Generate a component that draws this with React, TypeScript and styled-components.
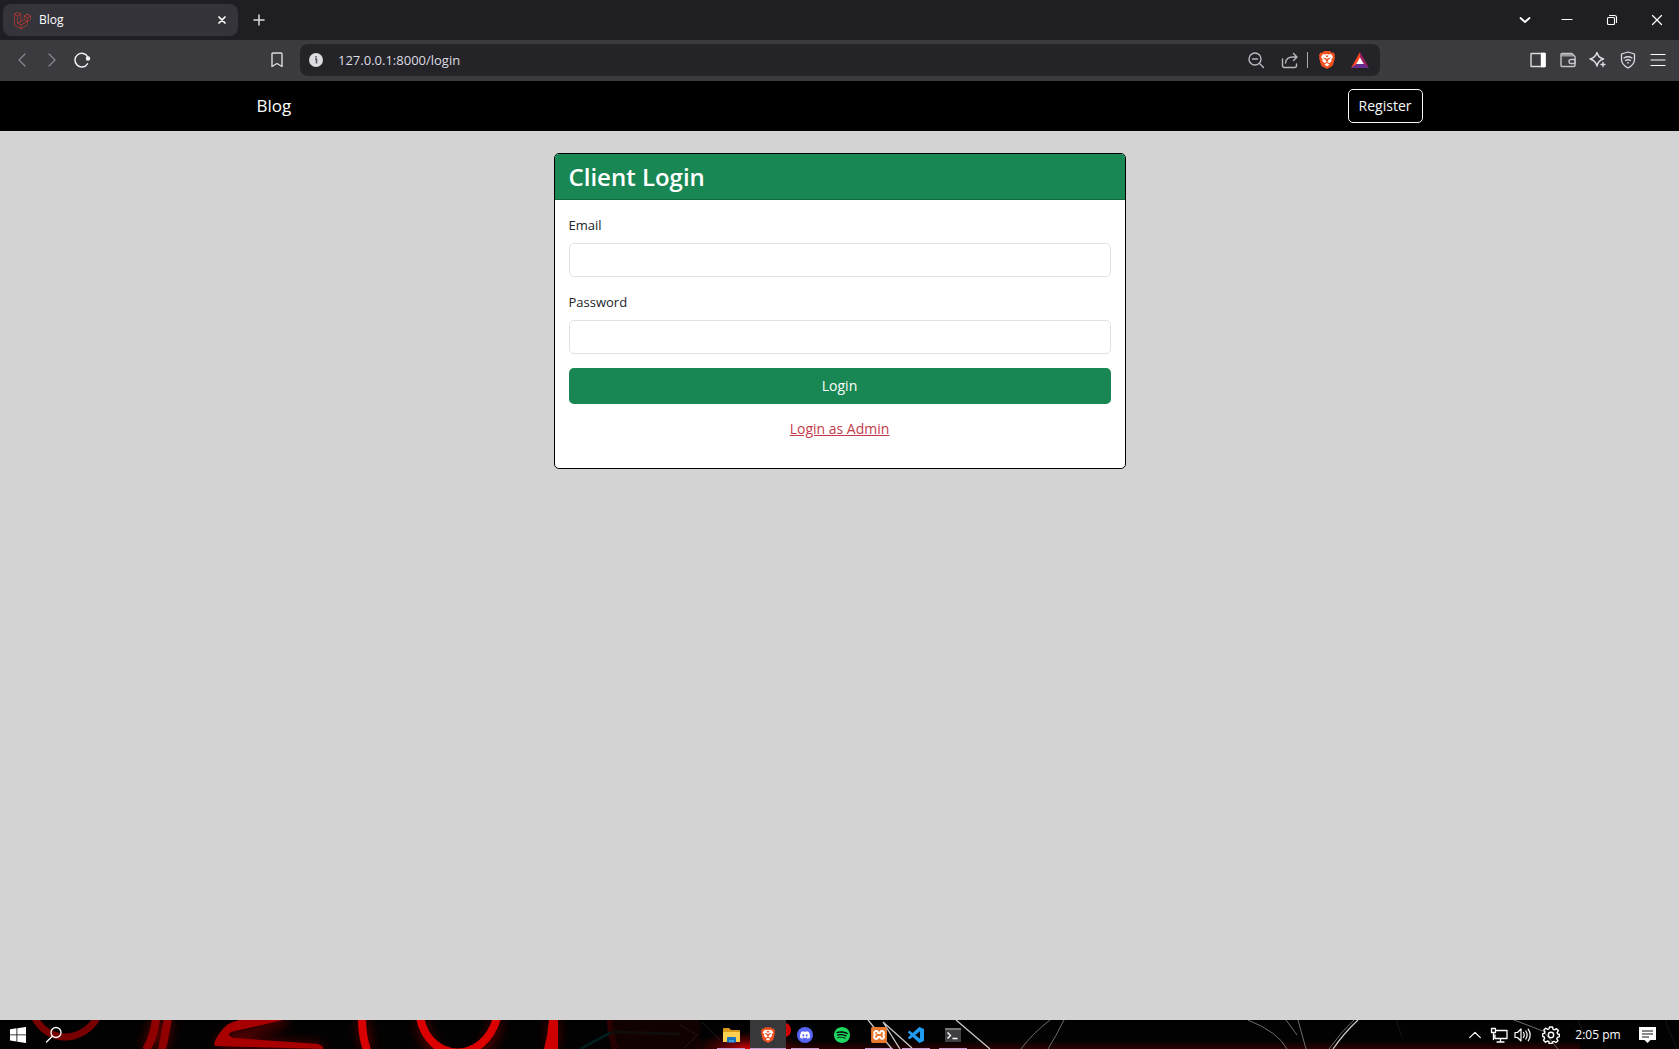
import React from "react";
import styled, { createGlobalStyle } from "styled-components";
import { SiLaravel, SiDiscord, SiSpotify, SiXampp } from "react-icons/si";

const GlobalStyle = createGlobalStyle`
  *, *::before, *::after { box-sizing: border-box; }
  body {
    margin: 0;
    background: #d3d3d3;
    font-family: "Open Sans", "Noto Sans", sans-serif;
    font-size: 14px;
    line-height: 22px;
    color: #212529;
  }
  button, input { font: inherit; }
`;

const Screen = styled.div`
  display: flex;
  flex-direction: column;
  min-height: 100vh;
`;

/* Browser window */

const TitleBar = styled.header`
  display: flex;
  align-items: center;
  justify-content: space-between;
  height: 40px;
  padding-left: 3px;
  background: #1f1e23;
`;

const Row = styled.div`
  display: flex;
  align-items: center;
`;

const Tab = styled.div`
  display: flex;
  align-items: center;
  gap: 8px;
  width: 235px;
  height: 32px;
  padding: 0 6px 0 11px;
  border-radius: 8px;
  background: #35343a;
  color: #fff;
  font-size: 12px;
`;

const TabTitle = styled.span`
  flex: 1;
`;

const IconButton = styled.button<{ $width?: number; $color?: string }>`
  display: flex;
  align-items: center;
  justify-content: center;
  flex: none;
  width: ${(p) => p.$width ?? 30}px;
  height: 28px;
  padding: 0;
  border: 0;
  background: transparent;
  color: ${(p) => p.$color ?? "#dcdbe0"};
`;

const Toolbar = styled.div`
  display: grid;
  grid-template-columns: 300px 1fr 299px;
  align-items: center;
  height: 41px;
  padding-bottom: 1px;
  background: #3b3a3f;
`;

const ToolbarStart = styled(Row)`
  justify-content: space-between;
  padding: 0 8px 0 7px;
`;

const ToolbarEnd = styled(Row)`
  justify-content: flex-end;
  padding-right: 6px;
`;

const AddressBar = styled.div`
  display: flex;
  align-items: center;
  height: 32px;
  padding: 0 3px 0 1px;
  border-radius: 8px;
  background: #242328;
`;

const AddressInput = styled.input`
  flex: 1;
  min-width: 0;
  padding: 0 7px;
  border: 0;
  outline: 0;
  background: transparent;
  color: #dddce0;
  font-size: 13px;
`;

const Divider = styled.span`
  width: 1px;
  height: 16px;
  margin-right: 3px;
  background: #a9a8ad;
`;

/* Page */

const NavBar = styled.nav`
  background: #000;
`;

const Container = styled.div`
  width: 100%;
  max-width: 1188px;
  margin: 0 auto;
  padding: 0 11px;
`;

const NavContent = styled(Container)`
  display: flex;
  align-items: center;
  justify-content: space-between;
  height: 50px;
`;

const Brand = styled.a`
  color: #fff;
  font-size: 17px;
  text-decoration: none;
`;

const RegisterLink = styled.a`
  padding: 5px 10px;
  border: 1px solid #f8f9fa;
  border-radius: 5px;
  color: #f8f9fa;
  font-size: 14px;
  text-decoration: none;
`;

const Main = styled.main`
  flex: 1;
  padding: 22px 0;
`;

const Card = styled.section`
  width: 50%;
  min-width: 320px;
  max-width: 572px;
  margin: 0 auto;
  border: 1px solid #000;
  border-radius: 5px;
  background: #fff;
  overflow: hidden;
`;

const CardHeader = styled.h3`
  margin: 0;
  padding: 7px 14px;
  border-bottom: 1px solid #15693f;
  background: #198754;
  color: #fff;
  font-size: 24px;
  font-weight: 600;
  line-height: 31px;
`;

const LoginForm = styled.form`
  display: flex;
  flex-direction: column;
  gap: 14px;
  padding: 14px 14px 28px;
`;

const Field = styled.div`
  display: flex;
  flex-direction: column;
  gap: 7px;
`;

const Label = styled.label`
  font-size: 13px;
`;

const TextInput = styled.input`
  height: 34px;
  padding: 5px 11px;
  border: 1px solid #dee2e6;
  border-radius: 5px;
  background: #fff;
`;

const SubmitButton = styled.button`
  height: 36px;
  border: 0;
  border-radius: 5px;
  background: #198754;
  color: #fff;
  font-size: 14px;
`;

const AdminLink = styled.a`
  align-self: center;
  color: #c43c4b;
  font-size: 14px;
  text-decoration: underline;
`;

/* Desktop taskbar */

const TaskBar = styled.footer`
  position: relative;
  display: grid;
  grid-template-columns: 1fr auto 1fr;
  height: 29px;
  background: #020202;
  overflow: hidden;
`;

const Wallpaper = styled.svg`
  position: absolute;
  inset: 0;
  width: 100%;
  height: 100%;
`;

const TaskGroup = styled.div<{ $align?: string }>`
  position: relative;
  display: flex;
  align-items: stretch;
  justify-content: ${(p) => p.$align ?? "flex-start"};
`;

const AppGroup = styled(TaskGroup)`
  gap: 1px;
  padding-left: 5px;
`;

const TaskButton = styled.button<{ $active?: boolean; $running?: boolean; $width?: number }>`
  display: flex;
  align-items: center;
  justify-content: center;
  width: ${(p) => p.$width ?? 36}px;
  padding: 1px 0 0;
  border: 0;
  color: #fff;
  background-color: ${(p) => (p.$active ? "#38373a" : "transparent")};
  background-image: ${(p) => (p.$running ? "linear-gradient(#c79bdc, #c79bdc)" : "none")};
  background-repeat: no-repeat;
  background-position: bottom center;
  background-size: ${(p) => (p.$active ? "36px" : "28px")} 1px;
`;

const Clock = styled.time`
  align-self: center;
  width: 62px;
  color: #fff;
  font-size: 12px;
  text-align: center;
`;

type LineIconProps = { size?: number; width?: number; children: React.ReactNode };

const LineIcon = ({ size = 18, width = 1.4, children }: LineIconProps) => (
  <svg
    width={size}
    height={size}
    viewBox="0 0 18 18"
    fill="none"
    stroke="currentColor"
    strokeWidth={width}
    strokeLinecap="round"
    strokeLinejoin="round"
    aria-hidden="true"
  >
    {children}
  </svg>
);

const BraveIcon = ({ width = 16, height = 18 }: { width?: number; height?: number }) => (
  <svg width={width} height={height} viewBox="0 0 32 36" aria-hidden="true">
    <path fill="#f1501f" d="M10 0h12l3.500 3.500 3.500-.5 3 5-1 3.500 1 2-3.500 13c-.7 2.500-2 3.700-4 5L16 36l-8.500-4.500c-2-1.300-3.300-2.500-4-5L0 13.500l1-2L0 8l3-5 3.500.5z" />
    <path fill="#fff" d="M16 6l4 1 4-1 4 6-3.500 5 1 3-5 4.500-3-2.500-1.500.5-1.500-.5-3 2.500-5-4.500 1-3L4 12l4-6 4 1z" />
    <path fill="#fff" d="M16 24l5 3-5 4-5-4z" />
    <path fill="#f1501f" d="M8 13l6 1.500-1 4zM24 13l-6 1.500 1 4zM13 9h6l-1.500 3h-3zM14.500 15h3l1 5-2.500 2-2.500-2z" />
  </svg>
);

const WallpaperArt = () => (
  <Wallpaper viewBox="0 0 1679 29" preserveAspectRatio="none" aria-hidden="true">
    <defs>
      <filter id="glow" x="-30%" y="-60%" width="160%" height="220%">
        <feGaussianBlur stdDeviation="6" />
      </filter>
      <filter id="soft">
        <feGaussianBlur stdDeviation="0.7" />
      </filter>
      <linearGradient id="floor" x1="0" y1="0" x2="0" y2="1">
        <stop offset="0.7" stopColor="#200" stopOpacity="0" />
        <stop offset="1" stopColor="#2b0200" />
      </linearGradient>
      <radialGradient id="ember">
        <stop offset="0" stopColor="#e00000" />
        <stop offset="1" stopColor="#500" stopOpacity="0" />
      </radialGradient>
    </defs>
    <rect x="780" width="800" height="29" fill="url(#floor)" />
    <g filter="url(#glow)" opacity="0.45" fill="none" stroke="#c00000" strokeWidth="10">
      <path d="M156 0Q154 17 146 29M167 0L162 29M285 0L218 22L322 29" />
      <path d="M362 0L367 29M421 0C430 56 486 56 497 0M553 0V29" />
    </g>
    <g filter="url(#soft)" fill="none">
      <path d="M34 -4C47 24 83 24 98 -4" stroke="#780000" strokeWidth="7" />
      <path d="M156 -1Q154 17 146 30M168 -1L162 30" stroke="#900000" strokeWidth="8" />
      <path fill="#a80000" d="M240 0H283L231 12Q226 16 234 18L318 24Q324 26 323 29L215 26Q212 23 222 10Q228 2 240 0Z" />
      <path d="M362 -1Q362 16 367 30" stroke="#d80000" strokeWidth="8" />
      <path d="M420 -2C430 44 484 44 497 -2" stroke="#dc0000" strokeWidth="8" />
      <path fill="#cf0000" d="M549 0H558V29H544Q548 15 549 0Z" />
      <path d="M610 0Q610 16 616 29" stroke="#300404" strokeWidth="6" />
      <path d="M580 29L612 12L680 14" stroke="#041b1a" strokeWidth="3" />
    </g>
    <rect x="610" width="90" height="29" fill="#1c0101" opacity="0.6" />
    <ellipse cx="748" cy="29" rx="58" ry="18" fill="url(#ember)" />
    <ellipse cx="785" cy="10" rx="6" ry="7" fill="#d00000" />
    <g fill="none" stroke="#c8c8c8" strokeWidth="1.300">
      <path d="M868 0L892 29M883 2L912 28M883 2L900 29M956 0L990 29" />
      <path d="M1358 0Q1344 13 1333 29" />
    </g>
    <g fill="none" stroke="#6d6d6d">
      <path d="M1050 0Q1032 14 1021 29M1064 0Q1056 16 1048 29M1248 0Q1278 12 1287 29" />
      <path d="M1286 0L1297 15M1298 0L1306 29M1354 0Q1340 13 1329 29M1514 0L1543 11L1558 29" />
      <path d="M680 5L697 15L684 28M702 2L720 20M1578 0L1586 20M1665 0L1677 29M1396 0L1402 17" opacity="0.2" />
    </g>
  </Wallpaper>
);

export default function App() {
  return (
    <Screen>
      <GlobalStyle />
      <TitleBar>
        <Row>
          <Tab>
            <SiLaravel size={17} color="#e23b30" aria-hidden="true" />
            <TabTitle>Blog</TabTitle>
            <IconButton $width={20} $color="#fff" aria-label="Close tab">
              <LineIcon width={1.7}><path d="M6 6l6 6M12 6l-6 6" /></LineIcon>
            </IconButton>
          </Tab>
          <IconButton $width={42} aria-label="New tab">
            <LineIcon width={1.5}><path d="M9 4v10M4 9h10" /></LineIcon>
          </IconButton>
        </Row>
        <Row>
          <IconButton $width={38} $color="#fff" aria-label="Search tabs">
            <LineIcon width={1.8}><path d="M4.500 7l4.500 4 4.500-4" /></LineIcon>
          </IconButton>
          <IconButton $width={45} $color="#fff" aria-label="Minimize">
            <LineIcon width={1}><path d="M4 8.500h10" /></LineIcon>
          </IconButton>
          <IconButton $width={45} $color="#fff" aria-label="Restore">
            <LineIcon width={1.1}>
              <rect x="4.500" y="6.500" width="7" height="7" rx="1" />
              <path d="M6.500 4.500h5a2 2 0 0 1 2 2v5" />
            </LineIcon>
          </IconButton>
          <IconButton $width={45} $color="#fff" aria-label="Close window">
            <LineIcon width={1.2}><path d="M4.500 4.500l9 9M13.500 4.500l-9 9" /></LineIcon>
          </IconButton>
        </Row>
      </TitleBar>

      <Toolbar>
        <ToolbarStart>
          <Row>
            <IconButton $color="#85848a" aria-label="Back">
              <LineIcon><path d="M12 3L6 9l6 6" /></LineIcon>
            </IconButton>
            <IconButton $color="#85848a" aria-label="Forward">
              <LineIcon><path d="M6 3l6 6-6 6" /></LineIcon>
            </IconButton>
            <IconButton $color="#f1f0f4" aria-label="Reload">
              <LineIcon width={1.500}>
                <path d="M14.800 6A6.800 6.800 0 1 0 14.500 12.800" />
                <circle cx="15" cy="7.500" r="1.500" fill="currentColor" />
              </LineIcon>
            </IconButton>
          </Row>
          <IconButton aria-label="Bookmark this page">
            <LineIcon>
              <path d="M5 2h8q1 0 1 1v12.500l-5-3-5 3V3q0-1 1-1z" />
            </LineIcon>
          </IconButton>
        </ToolbarStart>
        <AddressBar>
          <IconButton aria-label="Site information">
            <svg width="14" height="14" viewBox="0 0 14 14" aria-hidden="true">
              <circle cx="7" cy="7" r="7" fill="#dddce0" />
              <path d="M6 6h1.500v4.500M7 3v1.500" fill="none" stroke="#55545a" strokeWidth="1.500" />
            </svg>
          </IconButton>
          <AddressInput aria-label="Address" defaultValue="127.0.0.1:8000/login" />
          <IconButton $width={34} $color="#b9b8bd" aria-label="Zoom">
            <LineIcon>
              <circle cx="8" cy="8" r="6" />
              <path d="M12.500 12.500l4 4M5.500 8h5" />
            </LineIcon>
          </IconButton>
          <IconButton $width={34} $color="#b9b8bd" aria-label="Share">
            <LineIcon>
              <path d="M1.500 8v6.500q0 2 2 2h10q2 0 2-2V13M4.500 12q.5-6 7.500-6H16M12.500 2.500L16 6l-3.500 3.500" />
            </LineIcon>
          </IconButton>
          <Divider />
          <IconButton $width={32} aria-label="Brave Shields"><BraveIcon /></IconButton>
          <IconButton $width={34} aria-label="Brave Rewards">
            <svg width="18" height="16" viewBox="0 0 18 16" aria-hidden="true">
              <path fill="#ff4724" d="M9 0L0 16l6-3.500L9 6z" />
              <path fill="#9e1f63" d="M9 0l9 16-6-3.500L9 6z" />
              <path fill="#662d91" d="M0 16h18l-5.500-4h-7z" />
              <path fill="#fff" d="M9 5.500L12.800 12H5.200z" />
            </svg>
          </IconButton>
        </AddressBar>
        <ToolbarEnd>
          <IconButton aria-label="Sidebar">
            <LineIcon>
              <rect x="2" y="2.500" width="14" height="13" rx="0.500" />
              <path d="M12.500 2.500H16v13h-3.500z" fill="#fff" stroke="#fff" />
            </LineIcon>
          </IconButton>
          <IconButton $color="#c4c3c8" aria-label="Wallet">
            <LineIcon>
              <path d="M2 3.500q0-1 1-1h10l3 3v9q0 1-1 1H3q-1 0-1-1z" />
              <path d="M2.500 3h10.500l2 2.500H2.500z" fill="currentColor" fillOpacity="0.7" stroke="none" />
              <path d="M16 8.500h-4a2 2 0 0 0 0 4h4z" />
            </LineIcon>
          </IconButton>
          <IconButton aria-label="Leo AI">
            <LineIcon>
              <path d="M8 1.500q1 5 6.500 6.500-5.500 1.500-6.500 7Q6.500 9.500 1 8q5.500-1.500 7-6.500z" />
              <path d="M14 11.500v4M12 13.500h4" />
            </LineIcon>
          </IconButton>
          <IconButton aria-label="VPN">
            <LineIcon width={1.3}>
              <path d="M9 1l6.500 2v5.500q0 5-6.500 8.500-6.500-3.500-6.500-8.500V3z" />
              <path d="M5 7q4-2.500 8 0M6.500 9.500q2.500-1.500 5 0M8.500 11.800h1" />
            </LineIcon>
          </IconButton>
          <IconButton $color="#fff" aria-label="Menu">
            <LineIcon width={1.2}><path d="M2 3.500h14M2 9h14M2 14.500h14" /></LineIcon>
          </IconButton>
        </ToolbarEnd>
      </Toolbar>

      <NavBar>
        <NavContent>
          <Brand href="#blog">Blog</Brand>
          <RegisterLink href="#register">Register</RegisterLink>
        </NavContent>
      </NavBar>

      <Main>
        <Card>
          <CardHeader>Client Login</CardHeader>
          <LoginForm onSubmit={(event) => event.preventDefault()}>
            <Field>
              <Label htmlFor="email">Email</Label>
              <TextInput id="email" type="email" />
            </Field>
            <Field>
              <Label htmlFor="password">Password</Label>
              <TextInput id="password" type="password" />
            </Field>
            <SubmitButton type="submit">Login</SubmitButton>
            <AdminLink href="#admin">Login as Admin</AdminLink>
          </LoginForm>
        </Card>
      </Main>

      <TaskBar>
        <WallpaperArt />
        <TaskGroup>
          <TaskButton aria-label="Start">
            <svg width="16" height="16" viewBox="0 0 16 16" fill="#fff" aria-hidden="true">
              <path d="M0 2.200L6.500 1.300v6.200H0zM7.300 1.200L16 0v7.500H7.300zM0 8.300h6.500v6.200L0 13.600zM7.300 8.300H16v7.700l-8.700-1.200z" />
            </svg>
          </TaskButton>
          <TaskButton aria-label="Search">
            <LineIcon width={1.3}><circle cx="11" cy="6.500" r="5" /><path d="M7.300 10.300L1.500 16" /></LineIcon>
          </TaskButton>
        </TaskGroup>
        <AppGroup $align="center">
          <TaskButton $running aria-label="File Explorer">
            <svg width="17" height="15" viewBox="0 0 17 15" aria-hidden="true">
              <path fill="#d9991c" d="M0 1q0-1 1-1h5l2 2h8q1 0 1 1v4H0z" />
              <path fill="#fbd052" d="M0 4h17v10H0z" />
              <path fill="#1673c4" d="M4 14.500V10q0-1 1-1h7q1 0 1 1v4.500h-2V12H6v2.500z" />
              <path fill="#3d9be0" d="M6 12h5v2.500H6z" />
            </svg>
          </TaskButton>
          <TaskButton $running $active aria-label="Brave"><BraveIcon width={14} height={16} /></TaskButton>
          <TaskButton $running aria-label="Discord">
            <svg width="16" height="16" viewBox="0 0 16 16" aria-hidden="true">
              <circle cx="8" cy="8" r="8" fill="#5865f2" />
              <SiDiscord x="3" y="3" size={10} color="#fff" />
            </svg>
          </TaskButton>
          <TaskButton aria-label="Spotify"><SiSpotify size={16} color="#1ed760" /></TaskButton>
          <TaskButton $running aria-label="XAMPP">
            <svg width="16" height="16" viewBox="0 0 16 16" aria-hidden="true">
              <rect x="1" y="1" width="14" height="14" fill="#fff" />
              <SiXampp size={16} color="#e8782d" />
            </svg>
          </TaskButton>
          <TaskButton $running aria-label="Visual Studio Code">
            <svg width="16" height="16" viewBox="0 0 24 24" fill="#1f9cf0" aria-hidden="true">
              <path d="M23.150 2.587L18.210.21a1.494 1.494 0 0 0-1.705.29l-9.460 8.630-4.120-3.128a.999.999 0 0 0-1.276.057L.327 7.261A1 1 0 0 0 .326 8.740L3.899 12 .326 15.260a1 1 0 0 0 .001 1.479L1.650 17.940a.999.999 0 0 0 1.276.057l4.120-3.128 9.460 8.630a1.492 1.492 0 0 0 1.704.29l4.942-2.377A1.500 1.500 0 0 0 24 20.060V3.939a1.500 1.500 0 0 0-.85-1.352zm-5.146 14.861L10.826 12l7.178-5.448v10.896z" />
            </svg>
          </TaskButton>
          <TaskButton $running aria-label="Terminal">
            <svg width="16" height="14" viewBox="0 0 16 14" aria-hidden="true">
              <rect width="16" height="14" fill="#3f3f42" />
              <rect width="16" height="2" fill="#77777a" />
              <path d="M2.500 4.500L5.500 7.500l-3 3M7.500 10.500h5" fill="none" stroke="#fff" strokeWidth="1.400" />
            </svg>
          </TaskButton>
        </AppGroup>
        <TaskGroup $align="flex-end">
          <TaskButton $width={24} aria-label="Show hidden icons">
            <LineIcon size={16}><path d="M3 12l6-6 6 6" /></LineIcon>
          </TaskButton>
          <TaskButton $width={24} aria-label="Network">
            <LineIcon width={1.3}>
              <path d="M6.500 4.500H17v8H5V9M10.500 12.500v3M7 16h7M3.500 7v6.500" />
              <path d="M1.500 2.500h4v4h-4z" />
            </LineIcon>
          </TaskButton>
          <TaskButton $width={24} aria-label="Volume">
            <LineIcon width={1.2}>
              <path d="M1 6.500h2.500L7 3v12l-3.500-3.500H1zM9.500 6.500q1.500 2.500 0 5M11.800 5q2.700 4 0 8M14.200 3.200q4 5.800 0 11.600" />
            </LineIcon>
          </TaskButton>
          <TaskButton $width={32} aria-label="Settings">
            <LineIcon width={1.4}>
              <path d="M7.500 1h3l.5 2.200 1.500.7 2-1.200 1.800 1.900-1.200 2 .6 1.400 1.800.5v2.200l-2 .6-.7 1.500 1.200 2-2 1.700-2-1.100-1.500.6-.5 1.500h-3L7 15.600 5.500 15l-2 1.200-1.900-2 1.100-2L2.200 11 .5 10.300V8l1.800-.6.7-1.500-1.200-2 1.800-1.700 2 1.200L7 2.900z" />
              <circle cx="9" cy="9" r="2.700" />
            </LineIcon>
          </TaskButton>
          <Clock>2:05 pm</Clock>
          <TaskButton $width={36} aria-label="Notifications">
            <svg width="17" height="16" viewBox="0 0 17 16" aria-hidden="true">
              <path fill="#fff" d="M0 0h17v13h-5.500L8.500 16l-3-3H0z" />
              <path d="M3 4h11M3 7h11M3 10h7" stroke="#111" strokeWidth="1" />
            </svg>
          </TaskButton>
          <TaskButton $width={14} aria-label="Show desktop" />
        </TaskGroup>
      </TaskBar>
    </Screen>
  );
}
